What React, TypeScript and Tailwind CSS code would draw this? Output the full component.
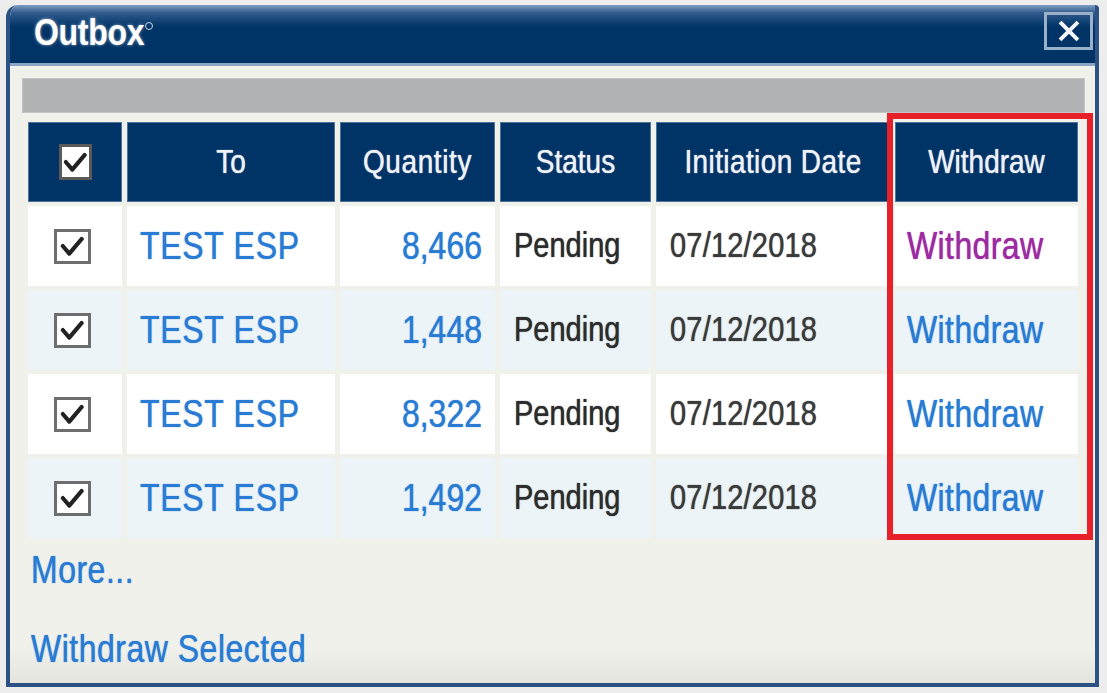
import React from "react";

const rows = [
  { qty: "8,466", visited: true, bg: "bg-white" },
  { qty: "1,448", visited: false, bg: "bg-[#edf4f8]" },
  { qty: "8,322", visited: false, bg: "bg-white" },
  { qty: "1,492", visited: false, bg: "bg-[#edf4f8]" },
];

function T({ children, className }: { children: React.ReactNode; className?: string }) {
  return <span className={"inline-block scale-y-[1.2] [text-shadow:0_0_1px_currentColor] " + (className || "")}>{children}</span>;
}

function Check({ header }: { header?: boolean }) {
  return (
    <div
      className={
        "flex items-center justify-center bg-white border-[3px] " +
        (header ? "w-[33px] h-[36px] border-[#5a5a5a]" : "w-[37px] h-[35px] border-[#6e6e6e]")
      }
    >
      <svg viewBox="0 0 24 24" className="w-[26px] h-[26px]">
        <path d="M3.5 12 L9.5 19 L21 5.5" fill="none" stroke="#222" strokeWidth="3.8" strokeLinecap="round" strokeLinejoin="round" />
      </svg>
    </div>
  );
}

export default function App() {
  const font = { fontFamily: '"Liberation Sans", Arial, sans-serif' };
  const head = "h-[80px] bg-[#003366] border border-[#4f719a] flex items-center justify-center text-[#eef2f7] text-[28px]";
  return (
    <div className="relative w-[1107px] h-[693px] bg-[#ededed] overflow-hidden pt-[5px] pl-[6px]" style={font}>
      <div className="w-[1093px] h-[682px] rounded-tl-[12px] rounded-tr-[4px] border-x-[4px] border-b-[4px] border-[#2b5283] flex flex-col overflow-hidden bg-[linear-gradient(to_bottom,#f1f1ec_0%,#f1f1ec_95%,#e4e4de_100%)]">
        <div className="h-[61px] shrink-0 flex items-start justify-between border-b-[3px] border-[#8ba4c3] bg-[linear-gradient(to_bottom,#7e9dc2_0px,#2f5a8c_8px,#003366_22px,#003366_100%)]">
          <div className="pl-[24px] pt-[9px] flex items-start">
            <span className="inline-block scale-y-[1.15] text-white text-[32px] font-bold leading-[36px] tracking-[-0.3px] [text-shadow:0_0_3px_rgba(255,255,255,0.6)]">Outbox</span>
            <span className="mt-[8px] ml-[1px] w-[8px] h-[8px] rounded-full border border-[#c9d4e2]"></span>
          </div>
          <div className="mt-[7px] mr-[2px] w-[49px] h-[38px] border-[3px] border-[#9bb0c9] flex items-center justify-center">
            <svg viewBox="0 0 24 24" className="w-[26px] h-[26px]">
              <path d="M5 5 L19 19 M19 5 L5 19" stroke="#f4f6fa" strokeWidth="3.6" strokeLinecap="square" />
            </svg>
          </div>
        </div>

        <div className="mt-[12px] ml-[12px] mr-[10px] h-[35px] bg-[#b1b2b4] border border-[#c4c5c6]"></div>

        <div className="mt-[9px] ml-[18px] grid grid-cols-[94px_208px_155px_151px_234px_183px] gap-x-[5px] gap-y-[4px]">
          <div className={head}><Check header /></div>
          <div className={head}><T>To</T></div>
          <div className={head}><T className="tracking-[0.6px]">Quantity</T></div>
          <div className={head}><T>Status</T></div>
          <div className={head}><T className="tracking-[0.4px]">Initiation Date</T></div>
          <div className={head}><T>Withdraw</T></div>
          {rows.map((r, i) => (
            <React.Fragment key={i}>
              <div className={r.bg + " h-[80px] flex items-center justify-center pr-[6px]"}><Check /></div>
              <div className={r.bg + " h-[80px] flex items-center pl-[13px] text-[32px] text-[#2a7bd3] tracking-[0.7px]"}><T>TEST ESP</T></div>
              <div className={r.bg + " h-[80px] flex items-center justify-end pr-[13px] text-[32px] text-[#2a7bd3]"}><T>{r.qty}</T></div>
              <div className={r.bg + " h-[80px] flex items-center pl-[14px] text-[29px] text-[#2c2c2c]"}><T>Pending</T></div>
              <div className={r.bg + " h-[80px] flex items-center pl-[14px] text-[29px] text-[#3a3a3a] tracking-[0.2px]"}><T>07/12/2018</T></div>
              <div className={r.bg + " h-[80px] flex items-center pl-[12px] text-[32px] tracking-[0.4px] " + (r.visited ? "text-[#9c2aa0]" : "text-[#2a7bd3]")}><T>Withdraw</T></div>
            </React.Fragment>
          ))}
        </div>

        <div className="mt-[14px] ml-[21px] text-[32px] leading-[37px] text-[#2a7bd3] tracking-[0.5px]"><T>More...</T></div>
        <div className="mt-[42px] ml-[21px] text-[32px] leading-[37px] text-[#2a7bd3] tracking-[0.5px]"><T>Withdraw Selected</T></div>
      </div>

      <div className="absolute left-[887px] top-[113px] w-[206px] h-[427px] border-[6px] border-[#e8202a]"></div>
    </div>
  );
}
